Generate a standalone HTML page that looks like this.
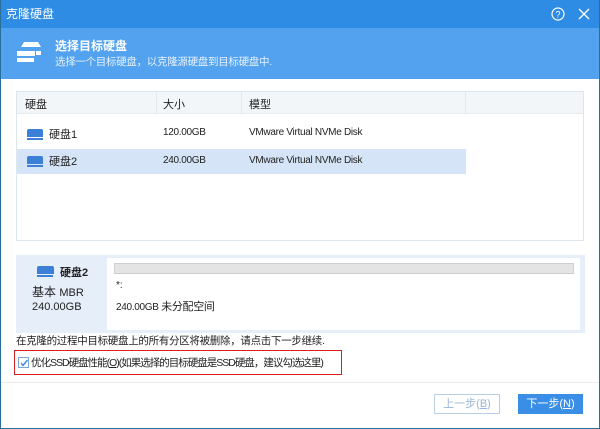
<!DOCTYPE html>
<html><head><meta charset="utf-8"><style>
*{margin:0;padding:0;box-sizing:border-box}
body{width:600px;height:429px;overflow:hidden;background:#fff;font-family:"Liberation Sans","Noto Sans CJK SC",sans-serif;font-size:11px;color:#222;position:relative}
.frame{position:absolute;inset:0;border:1px solid #2a6f9a;border-top:none}
.title{position:absolute;left:0;top:0;width:600px;height:28px;background:#2e8ce4;color:#fff;font-size:12px;line-height:28px;padding-left:6px}
.hdr{position:absolute;left:0;top:28px;width:600px;height:51px;background:#52a2f0;color:#fff}
.a{position:absolute}
.tbl{position:absolute;left:16px;top:91px;width:568px;height:150px;border:1px solid #dde6ef}
.th{position:absolute;left:0;top:0;width:100%;height:22px;background:#f3f6f9;border-bottom:1px solid #e6ebf0}
.disk{display:inline-block;width:16px;height:8px;background:#3b7fd6;border-radius:2px 2px 0 0;position:absolute}
.disk:after{content:"";position:absolute;left:0;top:9px;width:16px;height:2px;background:#3b7fd6}
.s{font-size:10px;letter-spacing:-0.3px}
</style></head><body>
<div class="title">克隆硬盘
<svg class="a" style="left:551px;top:7px" width="14" height="14"><circle cx="7" cy="7" r="6" fill="none" stroke="#fff" stroke-width="1.2"/><text x="7" y="10.5" font-size="9" fill="#fff" text-anchor="middle" font-family="Liberation Sans">?</text></svg>
<svg class="a" style="left:578px;top:8px" width="12" height="12"><path d="M1 1L11 11M11 1L1 11" stroke="#fff" stroke-width="1.3"/></svg>
</div>
<div class="hdr">
<svg class="a" style="left:16px;top:12px" width="26" height="24"><path d="M8 2h14l3 5H5z" fill="#fff"/><rect x="1" y="11" width="18" height="5" fill="#fff"/><rect x="1" y="18" width="17" height="4" fill="#fff"/><path d="M20 11h5v4h-5z" fill="#fff"/></svg>
<div class="a" style="left:55px;top:9px;font-weight:bold;font-size:12px">选择目标硬盘</div>
<div class="a s" style="left:55px;top:26px;font-size:10.5px;color:#e6f1fd">选择一个目标硬盘，以克隆源硬盘到目标硬盘中.</div>
</div>
<div class="tbl">
<div class="th"></div>
<div class="a" style="left:8px;top:4px">硬盘</div>
<div class="a" style="left:139px;top:0;width:1px;height:22px;background:#e3e8ed"></div>
<div class="a" style="left:146px;top:4px">大小</div>
<div class="a" style="left:224px;top:0;width:1px;height:22px;background:#e3e8ed"></div>
<div class="a" style="left:232px;top:4px">模型</div>
<div class="a" style="left:448px;top:0;width:1px;height:22px;background:#e3e8ed"></div>
<span class="disk" style="left:10px;top:37px"></span>
<div class="a" style="left:32px;top:34px">硬盘1</div>
<div class="a s" style="left:146px;top:35px">120.00GB</div>
<div class="a s" style="left:232px;top:35px">VMware Virtual NVMe Disk</div>
<div class="a" style="left:0;top:57px;width:449px;height:25px;background:#d5e5f7"></div>
<span class="disk" style="left:10px;top:64px"></span>
<div class="a" style="left:32px;top:61px">硬盘2</div>
<div class="a s" style="left:146px;top:63px">240.00GB</div>
<div class="a s" style="left:232px;top:63px">VMware Virtual NVMe Disk</div>
</div>
<div class="a" style="left:16px;top:255px;width:569px;height:78px;background:#e6eefa"></div>
<span class="disk" style="left:37px;top:266px;width:17px"></span>
<div class="a" style="left:60px;top:264px;font-weight:bold;font-size:11px">硬盘2</div>
<div class="a" style="left:32px;top:283px;font-size:12px">基本 <span style="font-size:11px">MBR</span></div>
<div class="a" style="left:32px;top:301px;font-size:11px">240.00GB</div>
<div class="a" style="left:107px;top:258px;width:473px;height:72px;background:#fff"></div>
<div class="a" style="left:114px;top:263px;width:460px;height:11px;background:#e4e4e4;border:1px solid #cfcfcf"></div>
<div class="a" style="left:116px;top:280px;font-size:10px">*:</div>
<div class="a s" style="left:116px;top:298px">240.00GB <span style="font-size:11px">未分配空间</span></div>
<div class="a s" style="left:16px;top:333px;font-size:10.5px;line-height:16px">在克隆的过程中目标硬盘上的所有分区将被删除，请点击下一步继续.</div>
<div class="a" style="left:14px;top:350px;width:328px;height:25px;border:1.5px solid #d8201f"></div>
<div class="a" style="left:18px;top:357px;width:11px;height:11px;border:1px solid #7aa9d8;background:#fff"></div>
<svg class="a" style="left:19px;top:358px" width="10" height="10"><path d="M2 5l2 2.5L8.5 2" fill="none" stroke="#3d86d8" stroke-width="1.4"/></svg>
<div class="a" style="left:31px;top:355px;font-size:10.5px;letter-spacing:-1px;line-height:16px;white-space:nowrap">优化SSD硬盘性能(<u>O</u>)(如果选择的目标硬盘是SSD硬盘，建议勾选这里)</div>
<div class="a" style="left:1px;top:382px;width:598px;height:1px;background:#e8ecf0"></div>
<div class="a" style="left:434px;top:394px;width:66px;height:20px;border:1px solid #b8cfe6;color:#9ab6d3;text-align:center;line-height:18px">上一步(<u>B</u>)</div>
<div class="a" style="left:518px;top:394px;width:65px;height:20px;background:#3a8ee6;color:#fff;text-align:center;line-height:20px">下一步(<u>N</u>)</div>
<div class="frame"></div>
</body></html>
